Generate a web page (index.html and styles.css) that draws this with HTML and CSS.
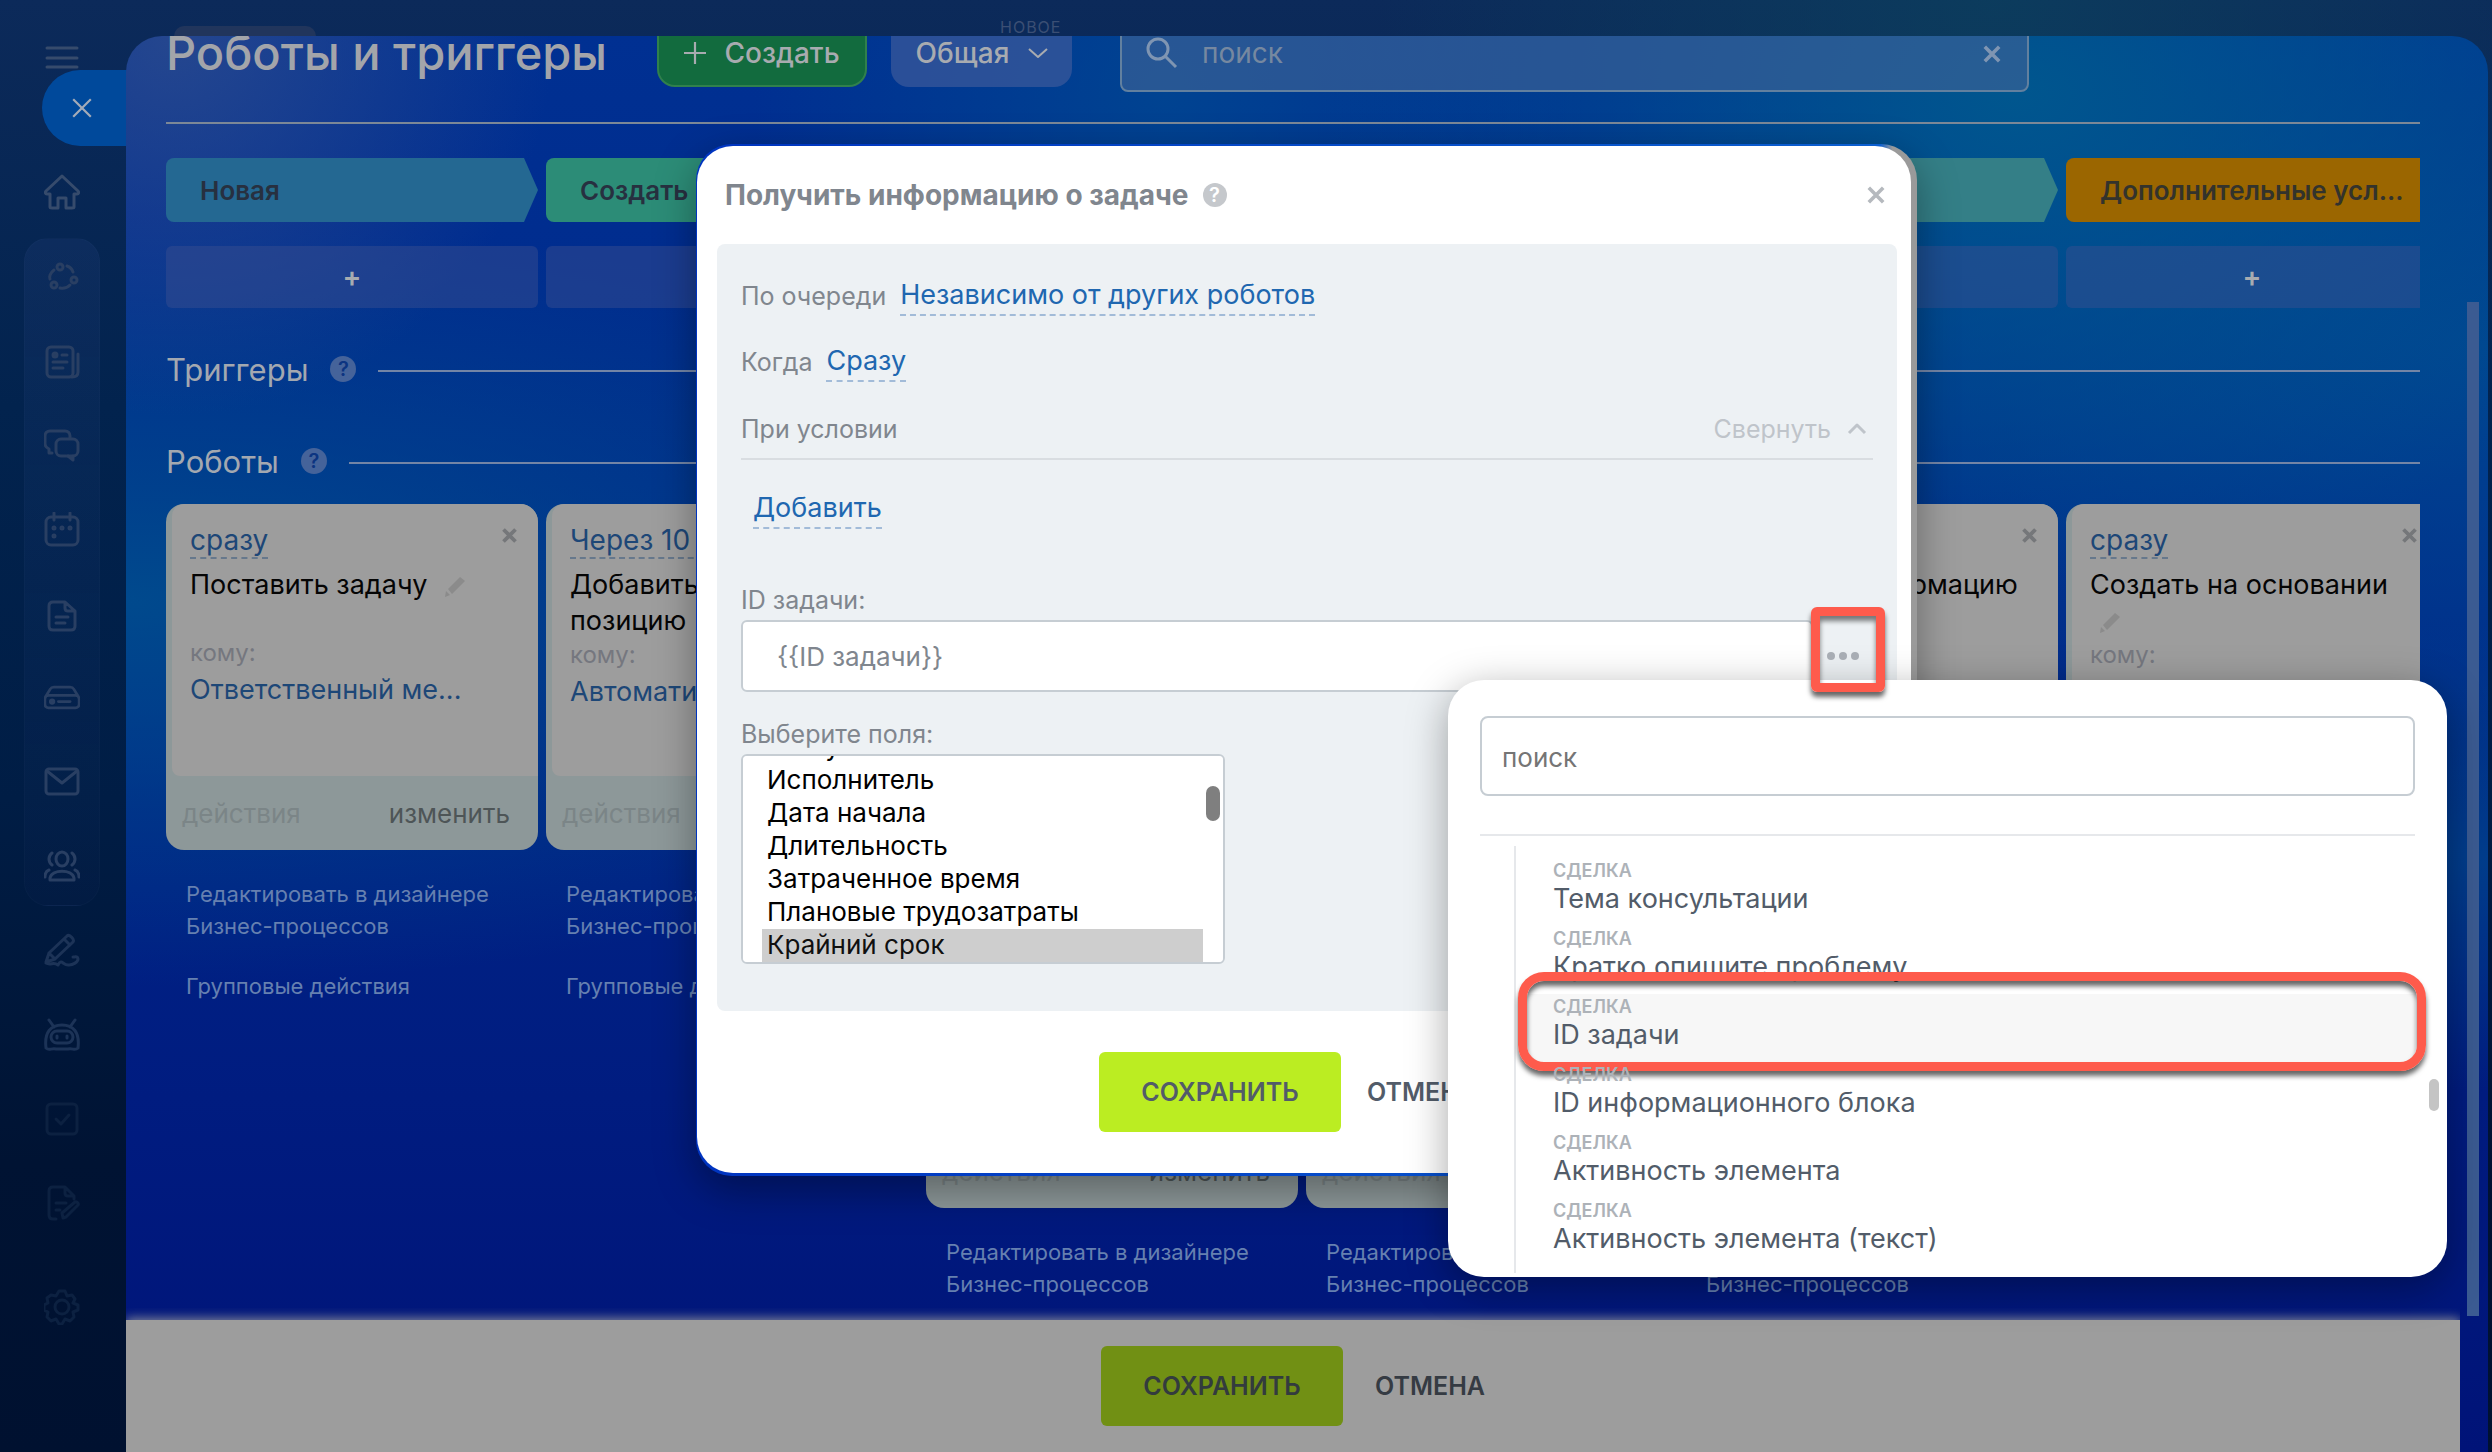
FILE: index.html
```html
<!doctype html>
<html lang="ru">
    <head>
        <meta charset="UTF-8" />
        <meta name="viewport" content="width=device-width, initial-scale=1.0" />
        <title>Роботы и триггеры</title>
        <link rel="stylesheet" href="styles.css">
    </head>
    <body>
        <svg width="0" height="0" class="sprite" aria-hidden="true">
            <symbol id="i-close" viewBox="0 0 20 20">
                <path d="M2 2l16 16M18 2L2 18" />
            </symbol>
            <symbol id="i-pencil" viewBox="0 0 24 24">
                <path d="M2 22l1-6 4 4zM5 14L17 2l5 4L9 19z" fill="currentColor" stroke="none" />
            </symbol>
        </svg>

        <nav class="sidebar">
            <a href="#" class="side-item" aria-label="Меню">
                <svg viewBox="0 0 36 36"><path d="M3 8h30M3 18h30M3 27h30" /></svg>
            </a>
            <a href="#" class="side-item side-home" aria-label="Главная">
                <svg viewBox="0 0 36 36"><path d="M18 2L2 17c-1 1-1 3 1 3h3v13c0 1 1 1 2 1h6V24h8v10h6c1 0 2 0 2-1V20h3c2 0 2-2 1-3z" /></svg>
            </a>
            <div class="side-group">
                <a href="#" class="side-item" aria-label="Процессы">
                    <svg viewBox="0 0 36 36"><circle cx="16" cy="7" r="3" /><circle cx="30" cy="20" r="3" /><circle cx="10" cy="25" r="3" /><path d="M23 6c3 1 5 3 6 6M10 10c-4 3-5 7-4 9M16 28c4 1 7 0 10-3" /></svg>
                </a>
                <a href="#" class="side-item" aria-label="Новости">
                    <svg viewBox="0 0 36 36"><rect x="3" y="3" width="26" height="30" rx="4" /><path d="M34 10v18c0 3-2 5-6 5M18 11h5M9 18h14M9 24h10" /><circle cx="11" cy="11" r="2" fill="currentColor" /></svg>
                </a>
                <a href="#" class="side-item" aria-label="Чаты">
                    <svg viewBox="0 0 36 36"><path d="M8 25l-3 0v-4c-2-1-4-3-4-5V8c0-3 2-5 5-5h15c3 0 5 2 5 5v2" /><rect x="12" y="11" width="22" height="17" rx="5" /><path d="M24 28l5 4v-4" /></svg>
                </a>
                <a href="#" class="side-item" aria-label="Календарь">
                    <svg viewBox="0 0 36 36"><rect x="2" y="5" width="32" height="28" rx="5" /><path d="M10 1v7M26 1v7" /><g fill="currentColor"><circle cx="10" cy="16" r="1" /><circle cx="18" cy="16" r="1" /><circle cx="26" cy="16" r="1" /><circle cx="10" cy="24" r="1" /></g></svg>
                </a>
                <a href="#" class="side-item" aria-label="Документы">
                    <svg viewBox="0 0 36 36"><path d="M21 6H9C6 6 5 8 5 10v20c0 2 1 4 4 4h18c3 0 4-2 4-4V15zv6c0 2 1 3 3 3h7M12 21h12M12 27h9" /></svg>
                </a>
                <a href="#" class="side-item" aria-label="Диск">
                    <svg viewBox="-2 0 40 36"><path d="M0 16L5 8c1-2 2-2 4-2h18c2 0 3 0 4 2l5 8" /><rect x="-1" y="15" width="38" height="14" rx="4" /><path d="M14 22h13" /><circle cx="7" cy="22" r="2" fill="currentColor" /></svg>
                </a>
                <a href="#" class="side-item" aria-label="Почта">
                    <svg viewBox="0 0 36 36"><rect x="2" y="5" width="32" height="25" rx="3" /><path d="M3 7l15 12L33 7" /></svg>
                </a>
                <a href="#" class="side-item" aria-label="Сотрудники">
                    <svg viewBox="0 0 36 36"><ellipse cx="18" cy="11" rx="6" ry="7" /><path d="M6 32v-2c2-9 22-9 24 0v2zM8 5c-4 3-4 9 0 12M28 5c4 3 4 9 0 12M5 22c-3 1-4 4-4 7M31 22c3 1 4 4 4 7" /></svg>
                </a>
            </div>
            <a href="#" class="side-item" aria-label="Подпись">
                <svg viewBox="0 0 36 36"><path d="M2 29l3-9L23 3c2-2 8 3 6 6L11 26zM20 6l6 6M5 20l6 6M2 30c5 3 7-2 12 2 4-7 5 1 11 0 4 0 9-3 9-6s-3-2-5-2" /></svg>
            </a>
            <a href="#" class="side-item" aria-label="Роботы">
                <svg viewBox="0 0 36 36"><path d="M2 31C0 15 7 8 18 8s18 7 16 23c-3 3-5 0-10 1H12c-5-1-7 2-10-1zM5 3l5 7M31 3l-5 7" /><rect x="7" y="14" width="22" height="12" rx="6" /><path d="M13 19v2M23 19v2" /></svg>
            </a>
            <a href="#" class="side-item side-dim" aria-label="Задачи">
                <svg viewBox="0 0 36 36"><rect x="3" y="3" width="30" height="30" rx="4" /><path d="M12 18l5 5 8-9" /></svg>
            </a>
            <a href="#" class="side-item side-dim" aria-label="Черновики">
                <svg viewBox="0 0 36 36"><path d="M30 14v-3L21 2H9C6 2 5 4 5 6v24c0 2 1 4 4 4h3M21 2v6c0 2 1 3 3 3h6M12 18h10M12 25h4M19 33l-1-5 13-11c2-1 4 2 3 3L22 32z" /></svg>
            </a>
            <a href="#" class="side-item side-dim side-gear" aria-label="Настройки">
                <svg viewBox="0 0 36 36"><circle cx="18" cy="18" r="7" /><path d="M15 2h6l2 5 5-1 3 4-2 4 5 2v5l-5 2 1 5-4 4-5-2-3 5h-3l-3-5-5 2-4-4 1-5-4-2v-5l4-2-1-5 4-3 5 1z" /></svg>
            </a>
        </nav>

        <div class="workspace">
            <div class="topbar">
                <span class="topbar-tab"></span>
                <span class="topbar-new">НОВОЕ</span>
            </div>

            <button class="slider-close" aria-label="Закрыть панель">
                <svg viewBox="0 0 20 20"><use href="#i-close" /></svg>
            </button>

            <div class="slider">
                <main class="slider-content">
                    <header class="page-header">
                        <h1>Роботы и триггеры</h1>
                        <button class="btn-create">
                            <svg viewBox="0 0 20 20"><path d="M10 0v20M0 10h20" /></svg>
                            Создать
                        </button>
                        <button class="btn-view">
                            Общая
                            <svg viewBox="0 0 20 12"><path d="M1 2l9 8 9-8" /></svg>
                        </button>
                        <div class="header-search">
                            <svg class="icon-search" viewBox="0 0 32 32"><circle cx="12" cy="12" r="10" /><path d="M19 19l11 11" /></svg>
                            <input type="text" placeholder="поиск" aria-label="Поиск роботов">
                            <button aria-label="Очистить">
                                <svg viewBox="0 0 20 20"><use href="#i-close" /></svg>
                            </button>
                        </div>
                    </header>

                    <div class="board stages">
                        <div class="stage stage-new">Новая</div>
                        <div class="stage stage-create">Создать</div>
                        <div class="stage stage-create"></div>
                        <div class="stage stage-teal"></div>
                        <div class="stage stage-teal"></div>
                        <div class="stage stage-extra">Дополнительные усл...</div>
                    </div>

                    <div class="board adders">
                        <button aria-label="Добавить">+</button>
                        <button aria-label="Добавить"></button>
                        <button aria-label="Добавить"></button>
                        <button aria-label="Добавить"></button>
                        <button aria-label="Добавить"></button>
                        <button aria-label="Добавить">+</button>
                    </div>

                    <div class="section-title">
                        <h2>Триггеры</h2>
                        <span class="help">?</span>
                    </div>
                    <div class="section-title section-robots">
                        <h2>Роботы</h2>
                        <span class="help">?</span>
                    </div>

                    <div class="board robots">
                        <div class="column">
                            <article class="card">
                                <div class="card-body">
                                    <a href="#" class="card-time">сразу</a>
                                    <button class="card-close" aria-label="Удалить"><svg viewBox="0 0 20 20"><use href="#i-close" /></svg></button>
                                    <h3>Поставить задачу <svg class="pencil"><use href="#i-pencil" /></svg></h3>
                                    <p>кому:</p>
                                    <a href="#" class="card-user">Ответственный ме...</a>
                                </div>
                                <div class="card-footer"><a href="#">действия</a><a href="#" class="edit">изменить</a></div>
                            </article>
                            <a href="#" class="designer-link">Редактировать в дизайнере Бизнес-процессов</a>
                            <a href="#" class="designer-link">Групповые действия</a>
                        </div>

                        <div class="column">
                            <article class="card">
                                <div class="card-body">
                                    <a href="#" class="card-time">Через 10 минут</a>
                                    <h3>Добавить товарную позицию</h3>
                                    <p>кому:</p>
                                    <a href="#" class="card-user">Автоматически</a>
                                </div>
                                <div class="card-footer"><a href="#">действия</a></div>
                            </article>
                            <a href="#" class="designer-link">Редактировать в дизайнере Бизнес-процессов</a>
                            <a href="#" class="designer-link">Групповые действия</a>
                        </div>

                        <div class="column">
                            <article class="card"></article>
                            <article class="card">
                                <div class="card-body"></div>
                                <div class="card-footer"><a href="#">действия</a><a href="#" class="edit">изменить</a></div>
                            </article>
                            <a href="#" class="designer-link">Редактировать в дизайнере Бизнес-процессов</a>
                        </div>

                        <div class="column">
                            <article class="card"></article>
                            <article class="card">
                                <div class="card-body"></div>
                                <div class="card-footer"><a href="#">действия</a></div>
                            </article>
                            <a href="#" class="designer-link">Редактировать в дизайнере Бизнес-процессов</a>
                        </div>

                        <div class="column">
                            <article class="card">
                                <div class="card-body">
                                    <a href="#" class="card-time">сразу</a>
                                    <button class="card-close" aria-label="Удалить"><svg viewBox="0 0 20 20"><use href="#i-close" /></svg></button>
                                    <h3>Получить информацию</h3>
                                </div>
                            </article>
                            <article class="card"></article>
                            <a href="#" class="designer-link">Редактировать в дизайнере Бизнес-процессов</a>
                        </div>

                        <div class="column">
                            <article class="card">
                                <div class="card-body">
                                    <a href="#" class="card-time">сразу</a>
                                    <button class="card-close" aria-label="Удалить"><svg viewBox="0 0 20 20"><use href="#i-close" /></svg></button>
                                    <h3>Создать на основании <svg class="pencil"><use href="#i-pencil" /></svg></h3>
                                    <p>кому:</p>
                                </div>
                            </article>
                        </div>
                    </div>
                </main>

                <footer class="slider-footer">
                    <button class="btn-save btn-save-dim">Сохранить</button>
                    <button class="btn-cancel btn-cancel-dim">Отмена</button>
                </footer>
                <div class="page-scroll"></div>
            </div>

            <div class="modal-frame" role="dialog" aria-labelledby="modal-title">
                <div class="modal">
                    <div class="modal-header">
                        <h2 id="modal-title">Получить информацию о задаче</h2>
                        <span class="help help-light">?</span>
                        <button class="modal-close" aria-label="Закрыть"><svg viewBox="0 0 20 20"><use href="#i-close" /></svg></button>
                    </div>

                    <form class="modal-body">
                        <div class="row"><span>По очереди</span><a href="#" class="dashed">Независимо от других роботов</a></div>
                        <div class="row"><span>Когда</span><a href="#" class="dashed">Сразу</a></div>
                        <div class="row row-condition">
                            <span>При условии</span>
                            <a href="#" class="collapse">Свернуть <svg viewBox="0 0 20 12"><path d="M2 10l8-8 8 8" /></svg></a>
                        </div>
                        <div class="row row-add"><a href="#" class="dashed">Добавить</a></div>

                        <label for="task-id">ID задачи:</label>
                        <div class="field">
                            <input id="task-id" type="text" value="{{ID задачи}}">
                            <button type="button" class="dots" aria-label="Выбрать значение"><i></i><i></i><i></i></button>
                        </div>

                        <label for="fields" class="label-fields">Выберите поля:</label>
                        <div class="listbox">
                            <select id="fields" multiple>
                                <option>ID</option>
                                <option>Название</option>
                                <option>Описание</option>
                                <option>Постановщик</option>
                                <option>Приоритет</option>
                                <option>Статус</option>
                                <option>Исполнитель</option>
                                <option>Дата начала</option>
                                <option>Длительность</option>
                                <option>Затраченное время</option>
                                <option>Плановые трудозатраты</option>
                                <option selected>Крайний срок</option>
                                <option>Плановое начало</option>
                                <option>Плановое завершение</option>
                                <option>Соисполнители</option>
                                <option>Наблюдатели</option>
                                <option>Теги</option>
                            </select>
                            <span class="listbox-thumb"></span>
                        </div>
                    </form>

                    <div class="modal-footer">
                        <button class="btn-save">Сохранить</button>
                        <button class="btn-cancel">Отмена</button>
                    </div>
                </div>

                <div class="picker">
                    <input type="text" placeholder="поиск" aria-label="Поиск значения">
                    <ul>
                        <li><small>Сделка</small>Тема консультации</li>
                        <li><small>Сделка</small>Кратко опишите проблему</li>
                        <li class="active"><small>Сделка</small>ID задачи</li>
                        <li><small>Сделка</small>ID информационного блока</li>
                        <li><small>Сделка</small>Активность элемента</li>
                        <li><small>Сделка</small>Активность элемента (текст)</li>
                    </ul>
                    <div class="picker-scroll"></div>
                </div>
            </div>
        </div>
        <script src="script.js"></script>
    </body>
</html>
```
FILE: styles.css
```css
* {
    margin: 0;
    padding: 0;
    box-sizing: border-box;
}

body {
    display: grid;
    grid-template-columns: 126px 1fr;
    height: 100vh;
    overflow: hidden;
    font-family: Inter, "Liberation Sans", sans-serif;
    font-size: 26px;
    background:
        radial-gradient(circle at 80% 0, rgba(12, 64, 94, 0.8), transparent 25%),
        linear-gradient(180deg, #0c2a5a 0%, #02234e 28%, #001d45 55%, #001333 80%, #001130 100%);
}

button,
input,
select {
    font: inherit;
    color: inherit;
    border: none;
    background: none;
}

button {
    cursor: pointer;
}

a {
    color: inherit;
    text-decoration: none;
}

svg {
    fill: none;
    stroke: currentColor;
    stroke-width: 2;
    stroke-linejoin: round;
}

.sprite {
    position: absolute;
}

/* sidebar */

.sidebar {
    display: flex;
    flex-direction: column;
    align-items: center;
    padding: 37px 2px 0 0;
}

.side-item {
    display: flex;
    align-items: center;
    justify-content: center;
    width: 42px;
    height: 42px;
    margin-bottom: 42px;
    color: #1c3357;
}

.side-item svg {
    width: 36px;
    height: 36px;
    stroke-width: 3;
    stroke-linecap: round;
}

.side-item:first-child,
.side-home {
    color: #364b6c;
}

.side-home {
    margin: 50px 0 25px;
}

.side-group {
    display: flex;
    flex-direction: column;
    gap: 42px;
    align-items: center;
    width: 76px;
    padding: 18px 0;
    margin-bottom: 24px;
    border-radius: 24px;
    border: 1px solid rgba(255, 255, 255, 0.02);
    background: linear-gradient(180deg, rgba(50, 80, 150, 0.16), rgba(50, 80, 150, 0.04));
}

.side-group .side-item {
    margin-bottom: 0;
    color: #293f63;
}

.side-item.side-dim {
    color: #0c2141;
}

.side-gear {
    margin-top: 20px;
}

/* slider */

.workspace {
    position: relative;
    display: flex;
    flex-direction: column;
    min-width: 0;
    padding-right: 4px;
}

.topbar {
    display: flex;
    align-items: flex-end;
    flex: none;
    height: 36px;
    padding-left: 48px;
}

.topbar-tab {
    width: 142px;
    height: 10px;
    border-radius: 12px 12px 0 0;
    background: #21355c;
}

.topbar-new {
    margin-left: 684px;
    font-size: 16px;
    line-height: 18px;
    letter-spacing: 1px;
    color: #3b4f74;
}

.slider-close {
    position: absolute;
    top: 70px;
    left: -84px;
    display: flex;
    align-items: center;
    width: 100px;
    height: 76px;
    padding-left: 29px;
    border-radius: 38px 0 0 38px;
    background: #00499b;
    color: #a3abb8;
}

.slider-close svg {
    width: 22px;
    height: 22px;
}

.slider {
    position: relative;
    display: flex;
    flex-direction: column;
    flex: 1;
    min-height: 0;
    overflow: hidden;
    border-radius: 36px 36px 0 0;
    background:
        radial-gradient(circle at 2% 0, rgba(46, 76, 142, 0.8), transparent 14%),
        radial-gradient(ellipse at 0 40%, rgba(0, 82, 142, 0.8), transparent 32%),
        radial-gradient(ellipse at 80% 4%, rgba(0, 90, 142, 0.9), transparent 26%),
        radial-gradient(ellipse at 44% 4%, rgba(0, 72, 145, 0.8), transparent 22%),
        radial-gradient(ellipse at 100% 22%, rgba(0, 72, 145, 0.9), transparent 30%),
        radial-gradient(ellipse at 100% 58%, rgba(0, 68, 142, 0.8), transparent 20%),
        linear-gradient(180deg, #003092 0%, #002688 45%, #001c80 75%, #001378 100%);
}

.slider-content {
    flex: 1;
    min-height: 0;
    overflow: hidden;
    padding: 0 68px 0 40px;
}

.page-header {
    display: flex;
    align-items: center;
    height: 132px;
    margin-top: -44px;
    padding: 22px 0 30px;
    border-bottom: 2px solid #7c8897;
    color: #a8abb0;
}

.page-header h1 {
    margin-right: 50px;
    font-size: 47px;
    font-weight: 500;
    line-height: 78px;
    color: #a3a5aa;
    white-space: nowrap;
}

.btn-create,
.btn-view {
    display: flex;
    align-items: center;
    justify-content: center;
    gap: 18px;
    height: 68px;
    border-radius: 18px;
    font-size: 28px;
    font-weight: 500;
}

.btn-create {
    width: 210px;
    background: #126b3e;
    border: 2px solid #30804c;
}

.btn-create svg {
    width: 22px;
    height: 22px;
}

.btn-view {
    width: 181px;
    margin: 0 48px 0 24px;
    background: rgba(60, 90, 155, 0.7);
}

.btn-view svg {
    width: 20px;
    height: 12px;
}

.header-search {
    display: flex;
    align-items: center;
    flex: 0 1 909px;
    height: 78px;
    padding: 0 26px 0 24px;
    border: 2px solid #62809f;
    border-radius: 8px;
    background: rgba(60, 98, 150, 0.65);
    color: #7f95b2;
}

.header-search .icon-search {
    width: 32px;
    height: 32px;
    stroke-width: 3;
}

.header-search input {
    flex: 1;
    padding-left: 24px;
    font-size: 28px;
}

.header-search input::placeholder {
    color: #7688a0;
}

.header-search button svg {
    width: 18px;
    height: 18px;
    stroke-width: 4;
}

.board {
    display: grid;
    grid-template-columns: repeat(6, 372px);
    gap: 8px;
    overflow: hidden;
}

.stages {
    margin-top: 34px;
}

.stage {
    height: 64px;
    padding-left: 34px;
    border-radius: 8px;
    clip-path: polygon(0 0, calc(100% - 14px) 0, 100% 50%, calc(100% - 14px) 100%, 0 100%);
    font-size: 26px;
    font-weight: 600;
    line-height: 66px;
    color: #273040;
    white-space: nowrap;
}

.stage-new {
    background: #246892;
}

.stage-create {
    background: #2c8c77;
}

.stage-teal {
    background: #347f87;
}

.stage-extra {
    background: #9b6600;
    clip-path: none;
    color: #33332c;
}

.adders {
    margin-top: 24px;
}

.adders button {
    height: 62px;
    border-radius: 6px;
    background: rgba(60, 80, 145, 0.45);
    color: #a7abb0;
    font-size: 28px;
    font-weight: 600;
}

.section-title {
    display: flex;
    align-items: center;
    gap: 22px;
    height: 40px;
    margin-top: 41px;
    color: #a3a8b0;
}

.section-title::after {
    content: "";
    flex: 1;
    height: 2px;
    margin-top: 4px;
    background: #7385a6;
}

.section-title h2 {
    font-size: 31px;
    font-weight: 400;
}

.section-robots {
    margin-top: 52px;
}

.help {
    flex: none;
    width: 26px;
    height: 26px;
    border-radius: 50%;
    background: #45639a;
    color: #0c3481;
    font-size: 20px;
    font-weight: 600;
    line-height: 26px;
    text-align: center;
}

.robots {
    margin-top: 23px;
    overflow: visible;
    clip-path: inset(0 0 -900px 0);
}

.card {
    display: flex;
    flex-direction: column;
    height: 346px;
    margin-bottom: 12px;
    overflow: hidden;
    border-radius: 18px;
    background: #8d9899;
}

.card-body {
    position: relative;
    flex: 1;
    margin-left: 6px;
    padding: 19px 18px 0;
    border-radius: 12px 0 0 8px;
    background: #9d9d9d;
}

.card-time,
.card-user {
    display: inline-block;
    line-height: 34px;
    color: #1d4777;
}

.card-time {
    font-size: 28px;
    border-bottom: 2px dashed #66788c;
}

.card-user {
    margin-top: 4px;
    font-size: 27px;
}

.card-close {
    position: absolute;
    top: 24px;
    right: 21px;
    display: flex;
}

.card-close svg {
    width: 15px;
    height: 15px;
    stroke-width: 5;
    color: #75777a;
}

.card h3 {
    min-height: 70px;
    margin-top: 8px;
    font-size: 27px;
    font-weight: 400;
    line-height: 36px;
    color: #050505;
}

.pencil {
    width: 24px;
    height: 24px;
    margin-left: 8px;
    vertical-align: middle;
    color: #8b8b8b;
}

.card p {
    font-size: 24px;
    line-height: 32px;
    color: #75777f;
}

.card-footer {
    display: flex;
    align-items: center;
    justify-content: space-between;
    height: 74px;
    padding: 0 28px 0 16px;
    color: #7b8587;
    font-size: 26px;
}

.card-footer .edit {
    color: #4e5557;
}

.designer-link {
    display: block;
    margin: 28px 30px 0 20px;
    font-size: 22px;
    line-height: 32px;
    color: #6680b0;
}

.slider-footer {
    display: flex;
    align-items: center;
    justify-content: center;
    gap: 20px;
    flex: none;
    height: 132px;
    margin-right: 28px;
    background: #9d9d9d;
    box-shadow: 0 -2px 10px rgba(157, 157, 157, 0.8);
    clip-path: inset(-12px 0 0 0);
}

.page-scroll {
    position: absolute;
    top: 266px;
    right: 9px;
    bottom: 136px;
    width: 12px;
    background: #3b5b92;
}

.btn-save {
    width: 242px;
    height: 80px;
    border-radius: 6px;
    background: #bbed22;
}

.btn-save,
.btn-cancel {
    font-size: 25px;
    font-weight: 600;
    text-transform: uppercase;
    color: #525c69;
}

.btn-cancel {
    padding-left: 12px;
}

.btn-save-dim {
    background: #719014;
    color: #333b3e;
}

.btn-cancel-dim {
    color: #353b43;
}

/* robot settings dialog */

.modal-frame {
    position: absolute;
    top: 144px;
    left: calc(50% - 613px);
    width: 1221px;
    padding: 2px 6px 3px 1px;
    border-radius: 36px;
    background: linear-gradient(90deg, #0034c0 0%, #0b5fd0 97%, #9a9a9a 98%);
    box-shadow: 0 14px 40px rgba(0, 0, 0, 0.35);
}

.modal {
    border-radius: 36px;
    background: #fff;
}

.modal-header {
    display: flex;
    align-items: center;
    gap: 14px;
    height: 98px;
    padding: 0 26px 0 28px;
}

.modal-header h2 {
    font-size: 28px;
    font-weight: 700;
    color: #80868e;
}

.help-light {
    width: 24px;
    height: 24px;
    line-height: 24px;
    background: #c5c8cc;
    color: #fff;
}

.modal-close {
    display: flex;
    margin-left: auto;
    color: #b5b9be;
}

.modal-close svg {
    width: 18px;
    height: 18px;
    stroke-width: 4;
}

.modal-body {
    margin: 0 14px 0 20px;
    padding: 31px 24px 47px;
    border-radius: 8px;
    background: #edf1f4;
    color: #80868e;
    font-size: 25px;
}

.row {
    display: flex;
    align-items: center;
    gap: 14px;
    height: 42px;
    margin-bottom: 24px;
}

.dashed {
    font-size: 27px;
    line-height: 38px;
    color: #2067b0;
    border-bottom: 2px dashed #a2bbd8;
}

.row-condition {
    justify-content: space-between;
    height: 53px;
    margin-bottom: 28px;
    padding-bottom: 8px;
    border-bottom: 2px solid #d9dde1;
}

.collapse {
    display: flex;
    align-items: center;
    gap: 16px;
    padding-right: 6px;
    color: #bfc4ca;
}

.collapse svg {
    width: 20px;
    height: 12px;
    stroke-width: 3;
}

.row-add {
    margin-bottom: 53px;
    padding-left: 12px;
}

.modal-body label {
    display: block;
    margin-bottom: 3px;
    line-height: 34px;
}

.modal-body .label-fields {
    margin-top: 25px;
}

.field {
    position: relative;
    display: flex;
}

.field input {
    flex: 1;
    height: 72px;
    padding: 0 34px;
    border: 2px solid #c6cdd3;
    border-radius: 6px;
    background: #fff;
    font-size: 26px;
}

.dots {
    position: relative;
    z-index: 3;
    display: flex;
    align-items: center;
    justify-content: center;
    gap: 4px;
    width: 60px;
}

.dots::after {
    content: "";
    position: absolute;
    inset: -13px -12px 0 -2px;
    border: 9px solid #fe5b4c;
    border-radius: 6px;
    box-shadow:
        0 5px 5px rgba(0, 0, 0, 0.6),
        inset 0 5px 5px rgba(0, 0, 0, 0.5);
}

.dots i {
    width: 8px;
    height: 8px;
    border-radius: 50%;
    background: #a8adb4;
}

.listbox {
    position: relative;
    width: 484px;
}

.listbox select {
    display: block;
    width: 100%;
    height: 210px;
    padding: 0 20px 0 19px;
    border: 2px solid #c6cdd3;
    border-radius: 6px;
    background: #fff;
    color: #000;
    font-size: 26px;
    outline: none;
}

.listbox option {
    height: 33px;
    min-height: 33px;
    padding: 0 5px;
    line-height: 33px;
}

.listbox-thumb {
    position: absolute;
    top: 32px;
    right: 5px;
    width: 14px;
    height: 35px;
    border-radius: 7px;
    background: #7f7f7f;
}

.modal-footer {
    display: flex;
    align-items: center;
    justify-content: center;
    gap: 14px;
    padding: 41px 32px 41px 0;
}

/* value picker */

.picker {
    position: absolute;
    z-index: 2;
    top: 536px;
    left: 752px;
    width: 999px;
    height: 597px;
    padding: 36px 32px 0;
    border-radius: 36px;
    background: #fff;
    box-shadow: 0 10px 40px rgba(0, 0, 0, 0.35);
}

.picker input {
    display: block;
    width: 100%;
    height: 80px;
    padding: 2px 20px 0;
    border: 2px solid #c6cdd3;
    border-radius: 8px;
}

.picker input::placeholder {
    color: #757575;
}

.picker ul {
    position: relative;
    margin-top: 38px;
    padding: 22px 0 7px;
    border-top: 2px solid #e6e8eb;
    list-style: none;
}

.picker ul::before {
    content: "";
    position: absolute;
    top: 10px;
    left: 34px;
    bottom: 0;
    width: 2px;
    background: #e6e8eb;
}

.picker li {
    position: relative;
    height: 68px;
    margin-left: 40px;
    padding-left: 33px;
    font-size: 27px;
    line-height: 30px;
    color: #525c69;
}

.picker small {
    display: block;
    font-size: 18px;
    font-weight: 600;
    line-height: 26px;
    text-transform: uppercase;
    color: #adb2b8;
}

.picker .active {
    background: #f7f7f7;
}

.picker .active::after {
    content: "";
    position: absolute;
    inset: -22px -11px -9px -2px;
    border: 9px solid #fe5b4c;
    border-radius: 26px;
    box-shadow:
        0 5px 5px rgba(0, 0, 0, 0.6),
        inset 0 5px 5px rgba(0, 0, 0, 0.6);
}

.picker-scroll {
    position: absolute;
    top: 399px;
    right: 8px;
    width: 10px;
    height: 32px;
    border-radius: 5px;
    background: #c4c4c4;
}
```
FILE: script.js
```js
// keep the chosen field at the bottom edge of the list
window.addEventListener("load", () => {
    const list = document.getElementById("fields");
    const option = list.selectedOptions[0];
    const overflow = option.getBoundingClientRect().bottom - list.getBoundingClientRect().bottom;
    list.scrollTop += overflow + 2;
});
```
